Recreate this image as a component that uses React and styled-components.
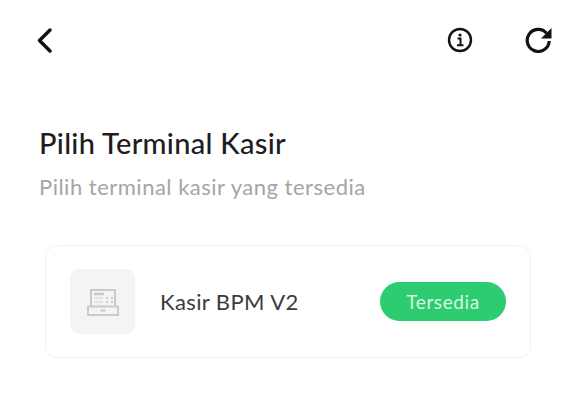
import React from 'react'
import styled, { createGlobalStyle } from 'styled-components'

const GlobalStyle = createGlobalStyle`
  html, body {
    margin: 0;
    padding: 0;
    background: #fff;
    font-family: "Lato", "Open Sans", sans-serif;
  }
`

const Page = styled.div`
  width: 576px;
  height: 407px;
  overflow: hidden;
  box-sizing: border-box;
  padding: 27px 23px 0 35px;
`

const Toolbar = styled.div`
  display: flex;
  align-items: center;
  justify-content: space-between;
  height: 26px;
`

const IconGroup = styled.div`
  display: flex;
  align-items: center;
  gap: 52px;
`

const IconButton = styled.span`
  display: flex;
  color: #111;
`

const Title = styled.h1`
  margin: 73px 0 0 4px;
  font-size: 29px;
  line-height: 34px;
  font-weight: 500;
  letter-spacing: 0.3px;
  color: #1d1d1f;
`

const Subtitle = styled.p`
  margin: 15px 0 0 4px;
  font-size: 22px;
  line-height: 24px;
  letter-spacing: 0.5px;
  color: #a3a5a6;
`

const Card = styled.div`
  display: flex;
  align-items: center;
  box-sizing: border-box;
  width: 486px;
  height: 113px;
  margin: 46px 0 0 10px;
  padding: 0 24px;
  border: 1px solid #f1f1f2;
  border-radius: 12px;
`

const Thumb = styled.div`
  display: flex;
  align-items: center;
  justify-content: center;
  width: 65px;
  height: 65px;
  border-radius: 9px;
  background: #f4f4f4;
  color: #c9caca;
`

const Name = styled.span`
  flex: 1;
  margin-left: 25px;
  font-size: 22px;
  letter-spacing: 0.4px;
  color: #3a3c3e;
`

const Badge = styled.span`
  display: flex;
  align-items: center;
  justify-content: center;
  width: 126px;
  height: 39px;
  border-radius: 20px;
  background: #2ecc71;
  color: #d6f8e2;
  font-size: 19px;
  letter-spacing: 0.6px;
`

const BackIcon = () => (
  <svg width="18" height="26" viewBox="0 0 18 26" fill="none" stroke="currentColor" strokeWidth="3.4" strokeLinecap="round" strokeLinejoin="round">
    <path d="M15 3 4.5 13.5 15 24" />
  </svg>
)

const InfoIcon = () => (
  <svg width="26" height="26" viewBox="0 0 26 26" fill="none" stroke="currentColor">
    <circle cx="13" cy="13" r="11" strokeWidth="2.4" />
    <circle cx="13" cy="8" r="1.6" fill="currentColor" stroke="none" />
    <path d="M10.5 11.5H13.5V18M10 18.3H16.5" strokeWidth="2" />
  </svg>
)

const RefreshIcon = () => (
  <svg width="28" height="26" viewBox="0 0 28 26" fill="none">
    <path d="M21.5 6.2A11 11 0 1 0 24.2 14" stroke="currentColor" strokeWidth="3.2" />
    <path d="M26.5 1V11.5H16Z" fill="currentColor" />
  </svg>
)

const RegisterIcon = () => (
  <svg width="32" height="28" viewBox="0 0 32 28" fill="none" stroke="currentColor" strokeWidth="2">
    <path d="M4 18V2h24v16" />
    <path d="M7 6h10" strokeWidth="2.5" />
    <path d="M7 10h9M7 14h9" strokeWidth="1.5" opacity="0.5" />
    <path d="M19 10h2M24 10h2M19 14h2M24 14h2" strokeWidth="2" />
    <path d="M1 18.5h30v8.5H1z" />
    <path d="M13.5 22.5h5" />
  </svg>
)

const App = () => (
  <Page>
    <GlobalStyle />
    <Toolbar>
      <IconButton><BackIcon /></IconButton>
      <IconGroup>
        <IconButton><InfoIcon /></IconButton>
        <IconButton><RefreshIcon /></IconButton>
      </IconGroup>
    </Toolbar>
    <Title>Pilih Terminal Kasir</Title>
    <Subtitle>Pilih terminal kasir yang tersedia</Subtitle>
    <Card>
      <Thumb><RegisterIcon /></Thumb>
      <Name>Kasir BPM V2</Name>
      <Badge>Tersedia</Badge>
    </Card>
  </Page>
)

export default App
